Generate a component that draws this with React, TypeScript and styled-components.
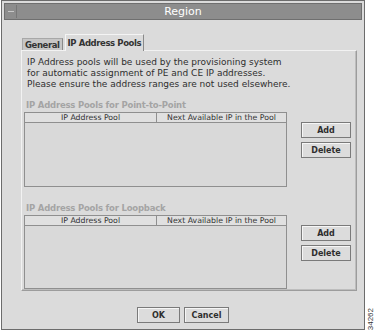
import React from 'react';
import styled, { createGlobalStyle } from 'styled-components';

const GlobalStyle = createGlobalStyle`
  html, body {
    margin: 0;
    padding: 0;
    background: #ffffff;
  }
  body {
    font-family: 'DejaVu Sans', 'Liberation Sans', sans-serif;
    color: #2e2e2e;
  }
`;

const Page = styled.div`
  display: flex;
  width: 375px;
  height: 334px;
`;

const Window = styled.div`
  margin-left: 1px;
  width: 364px;
  height: 330px;
  box-sizing: border-box;
  border: 1px solid #6c6c6c;
  background: #dbdbdb;
  padding: 2px 2px 0 2px;
  display: flex;
  flex-direction: column;
`;

const TitleBar = styled.div`
  position: relative;
  height: 17px;
  box-sizing: border-box;
  background: #8d8d8d;
  border: 1px solid #6f6f6f;
  display: flex;
  align-items: center;
  justify-content: center;
  color: #ffffff;
  font-size: 11px;
`;

const MinimizeBox = styled.div`
  position: absolute;
  left: 1px;
  top: 1px;
  width: 11px;
  height: 13px;
  box-sizing: border-box;
  border-right: 1px solid #777;
  display: flex;
  align-items: center;
  justify-content: center;

  &::after {
    content: '';
    width: 6px;
    height: 1px;
    background: #c8c8c8;
  }
`;

const Body = styled.div`
  padding: 13px 0 0 17px;
  display: flex;
  flex-direction: column;
`;

const TabStrip = styled.div`
  display: flex;
  align-items: flex-end;
  padding-left: 1px;
  gap: 2px;
  height: 17px;
`;

const Tab = styled.div<{ $active?: boolean }>`
  box-sizing: border-box;
  height: ${(p) => (p.$active ? '17px' : '12px')};
  padding: 0 2px;
  display: flex;
  align-items: center;
  font-size: 8.5px;
  letter-spacing: -0.4px;
  font-weight: bold;
  color: #333;
  background: ${(p) => (p.$active ? '#dbdbdb' : '#c6c6c6')};
  border: 1px solid ${(p) => (p.$active ? '#f4f4f4' : '#a8a8a8')};
  border-right-color: #8a8a8a;
  border-bottom: none;
  margin-bottom: ${(p) => (p.$active ? '-1px' : '0')};
  position: relative;
  z-index: 1;
`;

const Panel = styled.div`
  width: 336px;
  height: 241px;
  box-sizing: border-box;
  border: 1px solid #9c9c9c;
  border-top-color: #f2f2f2;
  border-left-color: #f2f2f2;
  box-shadow: inset -1px -1px 0 #bdbdbd;
  padding: 6px 0 0 2px;
  display: flex;
  flex-direction: column;
`;

const Description = styled.div`
  margin-left: 3px;
  font-size: 9px;
  line-height: 11px;
  height: 33px;
  color: #2e2e2e;
`;

const SectionTitle = styled.div<{ $gap: number }>`
  margin-top: ${(p) => p.$gap}px;
  margin-left: 2px;
  height: 12px;
  font-size: 8.5px;
  letter-spacing: -0.2px;
  font-weight: bold;
  color: #a4a4a4;
  line-height: 10px;
`;

const SectionRow = styled.div`
  display: flex;
  align-items: flex-start;
`;

const Table = styled.div<{ $height: number }>`
  width: 263px;
  height: ${(p) => p.$height}px;
  box-sizing: border-box;
  border: 1px solid #8f8f8f;
  background: #d9d9d9;
  display: flex;
  flex-direction: column;
`;

const HeaderRow = styled.div`
  display: grid;
  grid-template-columns: 131px 1fr;
  height: 9px;
  border-bottom: 1px solid #8f8f8f;
  background: #e0e0e0;
`;

const HeaderCell = styled.div`
  font-size: 7.8px;
  line-height: 9px;
  text-align: center;
  color: #333;
  white-space: nowrap;
  overflow: hidden;

  & + & {
    border-left: 1px solid #8f8f8f;
  }
`;

const ButtonColumn = styled.div`
  margin-left: 14px;
  padding-top: 10px;
  display: flex;
  flex-direction: column;
  gap: 4px;
`;

const Button = styled.button<{ $width: number }>`
  width: ${(p) => p.$width}px;
  height: 16px;
  box-sizing: border-box;
  padding: 0;
  margin: 0;
  border: 1px solid #7a7a7a;
  box-shadow: inset 1px 1px 0 #f6f6f6;
  background: #dcdcdc;
  font-family: 'DejaVu Sans', 'Liberation Sans', sans-serif;
  font-size: 8px;
  font-weight: bold;
  color: #2e2e2e;
  display: flex;
  align-items: center;
  justify-content: center;
`;

const Footer = styled.div`
  display: flex;
  justify-content: center;
  gap: 4px;
  margin-top: 16px;
  margin-left: -17px;
`;

const Side = styled.div`
  flex: 1;
  display: flex;
  align-items: flex-end;
  justify-content: center;
  padding-bottom: 4px;
`;

const FigureNumber = styled.div`
  writing-mode: vertical-rl;
  transform: rotate(180deg);
  font-family: 'Liberation Sans', sans-serif;
  font-size: 8px;
  color: #333;
`;

type PoolProps = { title: string; gap: number; height: number };

function PoolSection({ title, gap, height }: PoolProps) {
  return (
    <>
      <SectionTitle $gap={gap}>{title}</SectionTitle>
      <SectionRow>
        <Table $height={height}>
          <HeaderRow>
            <HeaderCell>IP Address Pool</HeaderCell>
            <HeaderCell>Next Available IP in the Pool</HeaderCell>
          </HeaderRow>
        </Table>
        <ButtonColumn>
          <Button $width={50}>Add</Button>
          <Button $width={50}>Delete</Button>
        </ButtonColumn>
      </SectionRow>
    </>
  );
}

export default function App() {
  return (
    <Page>
      <GlobalStyle />
      <Window>
        <TitleBar>
          <MinimizeBox />
          Region
        </TitleBar>
        <Body>
          <TabStrip>
            <Tab>General</Tab>
            <Tab $active>IP Address Pools</Tab>
          </TabStrip>
          <Panel>
            <Description>
              IP Address pools will be used by the provisioning system
              <br />
              for automatic assignment of PE and CE IP addresses.
              <br />
              Please ensure the address ranges are not used elsewhere.
            </Description>
            <PoolSection title="IP Address Pools for Point-to-Point" gap={10} height={75} />
            <PoolSection title="IP Address Pools for Loopback" gap={16} height={74} />
          </Panel>
          <Footer>
            <Button $width={43}>OK</Button>
            <Button $width={45}>Cancel</Button>
          </Footer>
        </Body>
      </Window>
      <Side>
        <FigureNumber>34262</FigureNumber>
      </Side>
    </Page>
  );
}
